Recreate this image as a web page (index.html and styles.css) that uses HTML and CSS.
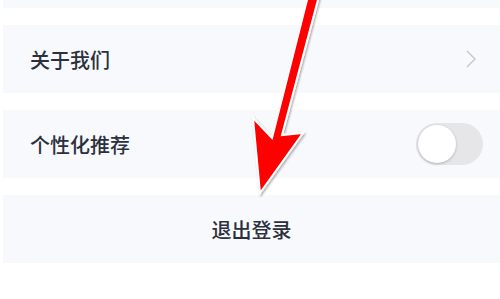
FILE: index.html
```html
<!DOCTYPE html>
<html lang="zh">
<head>
<meta charset="utf-8">
<link rel="stylesheet" href="styles.css">
</head>
<body>
<div class="list">
  <div class="card stub"></div>
  <div class="card row">
    <span class="label">关于我们</span>
    <svg class="chev" width="12" height="20" viewBox="0 0 12 20"><path d="M2 2 L10 10 L2 18" fill="none" stroke="#c3c6cc" stroke-width="1.4"/></svg>
  </div>
  <div class="card row">
    <span class="label">个性化推荐</span>
    <div class="toggle"><div class="knob"></div></div>
  </div>
  <div class="card row center">
    <span class="label">退出登录</span>
  </div>
</div>
<svg class="arrow" width="500" height="299" viewBox="0 0 500 299">
  <defs>
    <filter id="sh" x="-20%" y="-20%" width="140%" height="140%">
      <feDropShadow dx="1" dy="1.5" stdDeviation="1.2" flood-color="#000" flood-opacity="0.35"/>
    </filter>
  </defs>
  <polygon points="308,-4 319,-4 282,135 303,133 260,193 253,118 272,138" fill="#ff0000" stroke="#ffffff" stroke-width="2" stroke-linejoin="miter" filter="url(#sh)"/>
</svg>
</body>
</html>
```
FILE: styles.css
```css
html, body {
  margin: 0;
  padding: 0;
  background: #ffffff;
}
body {
  width: 500px;
  height: 299px;
  overflow: hidden;
  position: relative;
  font-family: "Noto Sans CJK SC", "Noto Sans", sans-serif;
}
.list {
  display: flex;
  flex-direction: column;
  gap: 17px;
  padding-left: 3px;
}
.card {
  background: #f8f9fd;
}
.stub {
  height: 8px;
}
.row {
  height: 68px;
  display: flex;
  align-items: center;
  justify-content: space-between;
  padding: 0 17px 0 27px;
}
.row.center {
  justify-content: center;
  padding: 0;
}
.label {
  font-size: 20px;
  font-weight: 500;
  color: #2b313c;
}
.chev {
  margin-right: 6px;
}
.toggle {
  width: 67px;
  height: 42px;
  border-radius: 21px;
  background: #e6e6e8;
  display: flex;
  align-items: center;
  padding: 2px;
  box-sizing: border-box;
}
.knob {
  width: 38px;
  height: 38px;
  border-radius: 50%;
  background: #ffffff;
  box-shadow: 0 1px 3px rgba(0,0,0,0.22);
}
.arrow {
  position: absolute;
  left: 0;
  top: 0;
}
```
